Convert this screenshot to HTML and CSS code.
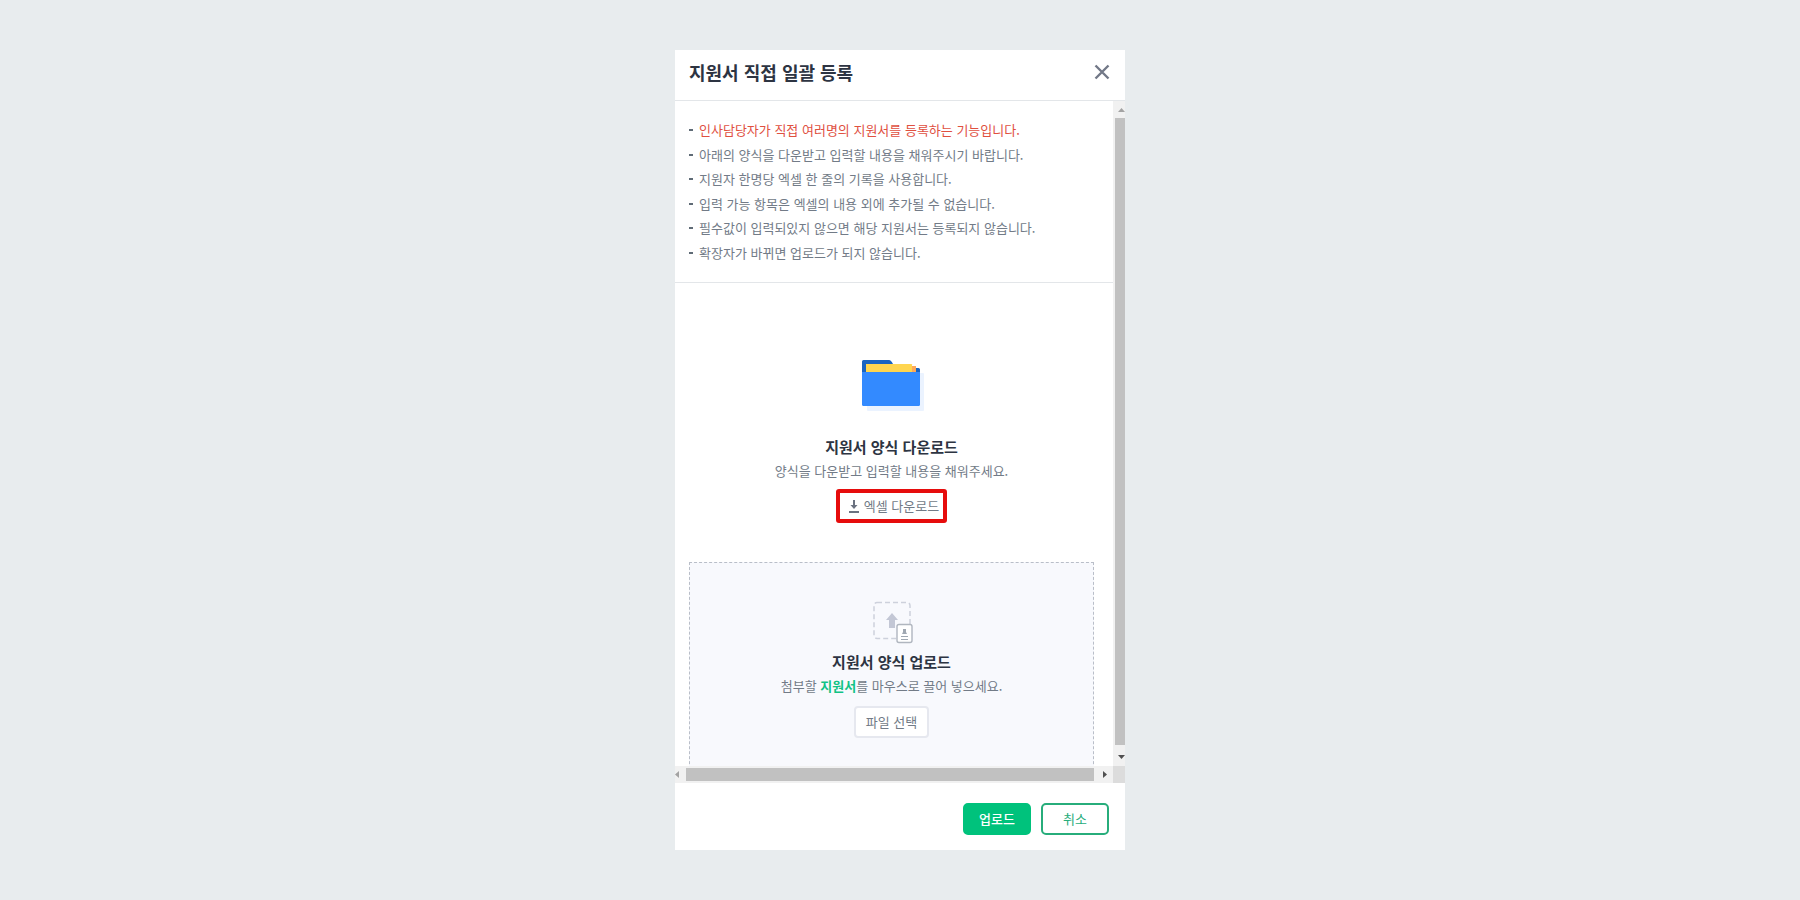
FILE: index.html
```html
<!DOCTYPE html>
<html lang="ko">
  <head>
    <meta charset="UTF-8" />
    <title>지원서 직접 일괄 등록</title>
    <link rel="stylesheet" href="styles.css">
  </head>
  <body>
    <div class="modal" role="dialog" aria-labelledby="modalTitle">
      <header class="modal-header">
        <h1 id="modalTitle">지원서 직접 일괄 등록</h1>
        <button type="button" class="close-button" aria-label="닫기">
          <svg width="16" height="16" viewBox="0 0 16 16">
            <path d="M1.5 1.5L14.5 14.5M14.5 1.5L1.5 14.5" stroke="#727887" stroke-width="2.4" />
          </svg>
        </button>
      </header>

      <div class="modal-body">
        <div class="content">
          <ul class="guide">
            <li class="warning">인사담당자가 직접 여러명의 지원서를 등록하는 기능입니다.</li>
            <li>아래의 양식을 다운받고 입력할 내용을 채워주시기 바랍니다.</li>
            <li>지원자 한명당 엑셀 한 줄의 기록을 사용합니다.</li>
            <li>입력 가능 항목은 엑셀의 내용 외에 추가될 수 없습니다.</li>
            <li>필수값이 입력되있지 않으면 해당 지원서는 등록되지 않습니다.</li>
            <li>확장자가 바뀌면 업로드가 되지 않습니다.</li>
          </ul>

          <section class="download">
            <svg class="folder-icon" width="64" height="56" viewBox="0 0 64 56">
              <rect x="7" y="15" width="57" height="38" rx="1" fill="#ebf3ff" />
              <path d="M2 20V3.5Q2 2 3.5 2H29Q31 2 33 6L36 10H58.5Q60 10 60 11.5V20Z" fill="#1a64c0" />
              <rect x="48" y="8" width="8" height="10" fill="#ffa959" />
              <path d="M6 6H51.500L52 6.500V18H6Z" fill="#ffd54f" />
              <path d="M2 14H60V46.5Q60 48 58.5 48H3.5Q2 48 2 46.5Z" fill="#338aff" />
            </svg>
            <h2>지원서 양식 다운로드</h2>
            <p>양식을 다운받고 입력할 내용을 채워주세요.</p>
            <button type="button" class="download-button">
              <svg width="10" height="13" viewBox="0 0 10 13">
                <path d="M4 0H6V5H8.5L5 9L1.5 5H4ZM0 11H10V13H0Z" fill="#6b7280" />
              </svg>
              엑셀 다운로드
            </button>
          </section>

          <section class="upload">
            <svg class="upload-icon" width="42" height="44" viewBox="0 0 42 44">
              <rect x="3" y="1.5" width="36" height="36" rx="3" fill="none" stroke="#cdd1dc" stroke-width="1.5" stroke-dasharray="5 3" />
              <path d="M21 12L27 19H24V27H18V19H15Z" fill="#c3c7d5" />
              <rect x="26" y="23.5" width="15" height="18" rx="2" fill="#fff" stroke="#b0b6bf" stroke-width="1.4" />
              <path d="M32 28H35V31L36 33H31L32 31Z" fill="#a0a8b2" />
              <path d="M30 35.5H37M30 38.5H37" stroke="#a0a8b2" />
            </svg>
            <h2>지원서 양식 업로드</h2>
            <p>첨부할 <strong>지원서</strong>를 마우스로 끌어 넣으세요.</p>
            <button type="button" class="file-button">파일 선택</button>
          </section>
        </div>

        <!-- 스크롤바 -->
        <div class="scrollbar vertical" aria-hidden="true">
          <svg width="7" height="4" viewBox="0 0 7 4"><path d="M0 4L3.5 0L7 4Z" fill="#a3a3a3" /></svg>
          <div class="thumb"></div>
          <svg width="7" height="4" viewBox="0 0 7 4"><path d="M0 0L3.5 4L7 0Z" fill="#505050" /></svg>
        </div>
        <div class="scrollbar horizontal" aria-hidden="true">
          <svg width="4" height="7" viewBox="0 0 4 7"><path d="M4 0L0 3.5L4 7Z" fill="#a3a3a3" /></svg>
          <div class="thumb"></div>
          <svg width="4" height="7" viewBox="0 0 4 7"><path d="M0 0L4 3.5L0 7Z" fill="#505050" /></svg>
        </div>
        <div class="corner"></div>
      </div>

      <footer class="modal-footer">
        <button type="button" class="primary-button">업로드</button>
        <button type="button" class="cancel-button">취소</button>
      </footer>
    </div>
  </body>
</html>
```
FILE: styles.css
```css
* {
  box-sizing: border-box;
}
body {
  display: flex;
  justify-content: center;
  height: 100vh;
  margin: 0;
  padding: 50px 20px;
  background-color: #e8ecee;
  color: #727b87;
  font-family: "Noto Sans CJK KR", sans-serif;
  font-size: 13px;
  line-height: 20px;
}
h1,
h2,
p,
ul {
  margin: 0;
  padding: 0;
}
button {
  padding: 0;
  border: none;
  background: none;
  color: inherit;
  font: inherit;
  cursor: pointer;
}
svg {
  display: block;
}
.modal {
  display: flex;
  flex-direction: column;
  width: 100%;
  max-width: 450px;
  background-color: #fff;
}

/* 헤더 */
.modal-header {
  display: flex;
  align-items: center;
  justify-content: space-between;
  padding: 9px 15px 15px 14px;
  border-bottom: 1px solid #e3e6e9;
}
.modal-header h1 {
  color: #2d3442;
  font-size: 18px;
  font-weight: 700;
  line-height: 26px;
}

/* 본문 */
.modal-body {
  display: grid;
  flex: 1;
  grid-template-columns: 1fr 12px;
  grid-template-rows: 1fr 17px;
  min-height: 0;
}
.content {
  overflow: hidden;
}
.guide {
  display: grid;
  align-content: space-between;
  height: 182px;
  padding: 19px 14px 19px;
  border-bottom: 1px solid #e3e6e9;
  list-style: none;
}
.guide li::before {
  content: "";
  display: inline-block;
  width: 4px;
  height: 2px;
  margin-right: 6px;
  background-color: #5f6b76;
  vertical-align: 4px;
}
.guide .warning {
  color: #e0503f;
}
.download,
.upload {
  display: flex;
  flex-direction: column;
  align-items: center;
}
.download {
  padding: 75px 19px 39px 14px;
}
.download h2,
.upload h2 {
  margin-bottom: 3px;
  color: #2d3442;
  font-size: 15px;
  font-weight: 700;
  line-height: 22px;
}
.folder-icon {
  margin-bottom: 22px;
}
.download-button {
  display: flex;
  align-items: center;
  gap: 5px;
  height: 34px;
  margin-top: 8px;
  padding: 0 4px 0 9px;
  border: 4px solid #e60c0c;
  border-radius: 3px;
}
.upload {
  margin: 0 19px 0 14px;
  padding: 38px 0 60px;
  border: 1px dashed #b9bec8;
  background-color: #f8f9fd;
}
.upload-icon {
  margin-bottom: 6px;
}
.upload strong {
  color: #12c285;
  font-weight: 700;
}
.file-button {
  height: 32px;
  margin-top: 10px;
  padding: 0 10px;
  border: 2px solid #e6e8ef;
  border-radius: 4px;
  background-color: #fff;
}

/* 스크롤바 */
.scrollbar {
  display: flex;
  align-items: center;
  background-color: #f1f1f1;
}
.scrollbar .thumb {
  flex: 1;
  background-color: #c1c1c1;
}
.vertical {
  flex-direction: column;
  align-items: flex-end;
  gap: 6px;
  padding: 7px 0;
}
.vertical .thumb {
  width: 10px;
  margin-bottom: 4px;
}
.horizontal {
  gap: 7px;
  padding-right: 6px;
}
.horizontal .thumb {
  height: 13px;
  margin-right: 2px;
}
.corner {
  background-color: #dcdcdc;
}

/* 하단 버튼 */
.modal-footer {
  display: flex;
  justify-content: flex-end;
  gap: 10px;
  padding: 20px 16px 15px;
}
.primary-button,
.cancel-button {
  width: 68px;
  height: 32px;
  border: 2px solid #00c27c;
  border-radius: 5px;
}
.primary-button {
  background-color: #00c27c;
  color: #fff;
  font-weight: 500;
}
.cancel-button {
  border-color: #27ad7b;
  color: #27ad7b;
}
```
